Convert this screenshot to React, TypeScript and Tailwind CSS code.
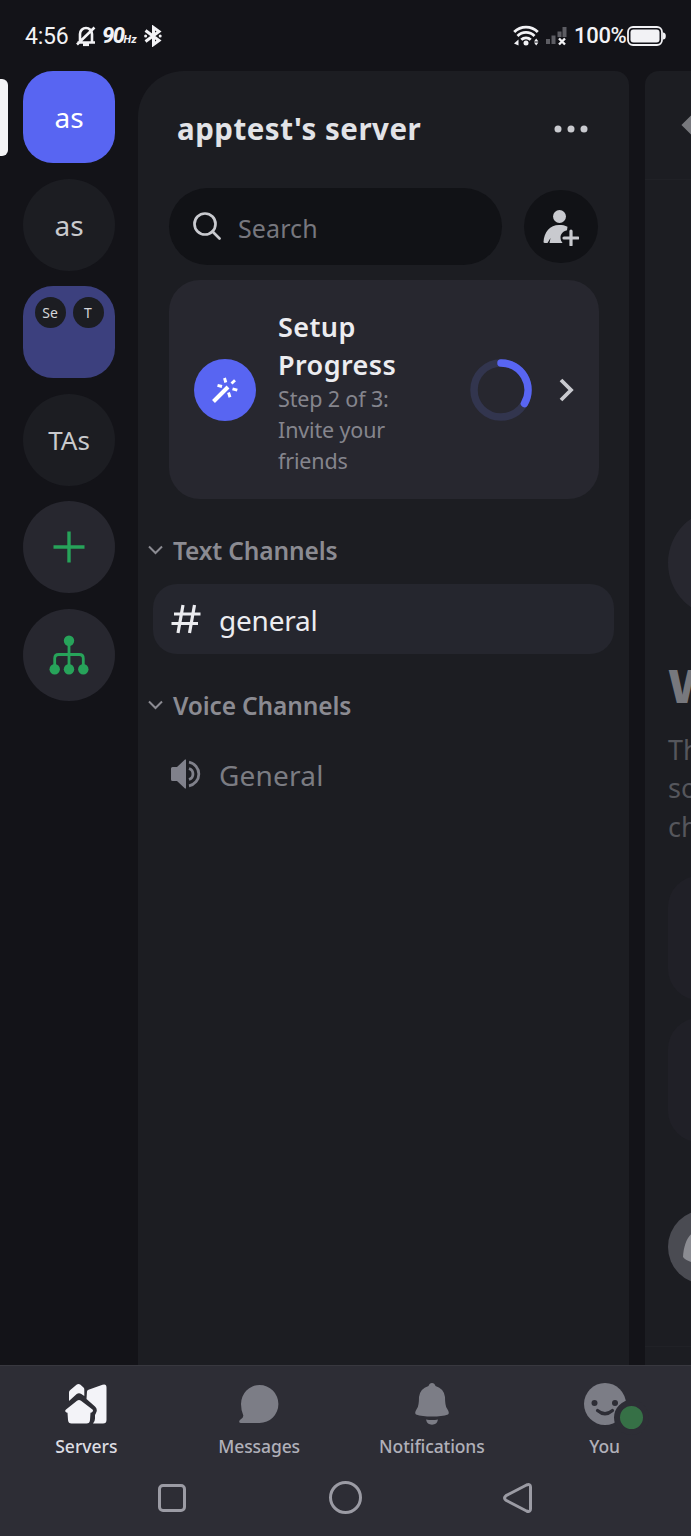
import React from 'react';

function StatusBar() {
  return (
    <header className="flex h-[71px] shrink-0 items-center justify-between pl-[25px] pr-[25px] font-['Roboto',sans-serif] text-[#f2f2f5]">
      <div className="flex h-[30px] items-center">
        <span className="w-[51px] pt-[2px] text-[23px] leading-[30px] tracking-[-0.2px]">4:56</span>
        <svg className="h-[22px] w-[20px]" viewBox="0 0 20 22" fill="none" stroke="currentColor" strokeWidth="2.6">
          <path d="M4 16V9a6 6 0 0 1 12 0v8M1.500 17.500h17.500M1 19.500 18.500 2.500" />
          <path d="M7 19.500h6" strokeWidth="3.200" />
        </svg>
        <span className="ml-[6px] pt-[1px] text-[22px] font-extrabold italic leading-[30px] tracking-[-1.5px]">90</span>
        <span className="mr-[7px] mt-[8px] text-[11px] font-bold italic leading-[14px]">Hz</span>
        <svg className="h-[22px] w-[18px]" viewBox="0 0 18 22" fill="none" stroke="currentColor" strokeWidth="3">
          <path d="M1.500 5.500 15 15.500 9.500 19.500V2.500l5.500 4L1.500 16.500" />
          <circle cx="1.600" cy="11" r="1.500" fill="currentColor" stroke="none" />
          <circle cx="16.200" cy="11" r="1.500" fill="currentColor" stroke="none" />
        </svg>
      </div>
      <div className="flex h-[30px] items-center">
        <svg className="h-[21px] w-[26px]" viewBox="0 0 26 21" fill="none" stroke="currentColor" strokeWidth="2.800">
          <path d="M1.200 7a16.500 16.500 0 0 1 23.600 0M4.500 11a12 12 0 0 1 17 0M8.300 14.800a6.500 6.500 0 0 1 9.400 0" />
          <circle cx="13" cy="18" r="2.500" fill="currentColor" stroke="none" />
          <path d="m1 18.500 4.500-4v6zM21 16.500l2.200-3 2.200 3zM21 17.500l2.200 3 2.200-3z" fill="currentColor" stroke="none" />
        </svg>
        <svg className="ml-[6px] h-[20px] w-[22px]" viewBox="0 0 22 20">
          <path d="M1 13h4v5H1zM6.500 9.500h4V18h-4zM12.500 5.500h4V11h-4zM17.500 1h4v10h-4z" fill="#5d5d63" />
          <path d="m14 12.500 6 6m0-6-6 6" stroke="currentColor" strokeWidth="2.400" />
        </svg>
        <span className="ml-[7px] w-[53px] pt-[1px] text-[22px] font-medium leading-[30px] tracking-[-0.3px]">100%</span>
        <svg className="h-[20px] w-[39px]" viewBox="0 0 39 20">
          <rect x="1" y="1" width="34" height="18" rx="5" fill="none" stroke="currentColor" strokeWidth="1.800" />
          <rect x="3.500" y="3.500" width="29" height="13" rx="3" fill="currentColor" />
          <path d="M36 6.500q2.800 0 2.800 3.500T36 13.500z" fill="currentColor" />
        </svg>
      </div>
    </header>
  );
}

function ServerRail() {
  const circle = 'flex size-[92px] shrink-0 items-center justify-center rounded-full';
  return (
    <nav className="relative flex w-[138px] shrink-0 flex-col items-center gap-[15.5px] text-[28px] text-[#c9cacd]">
      <span className="absolute left-[-8px] top-[8px] h-[77px] w-[16px] rounded-[6px] bg-[#f4f4f6]" />
      <div className="flex size-[92px] shrink-0 items-center justify-center rounded-[30px] bg-[#5865f2] text-white">as</div>
      <div className={circle + ' bg-[#1c1d22]'}>as</div>
      <div className="flex size-[92px] shrink-0 items-start justify-center gap-[7px] rounded-[30px] bg-[#3c407e] pt-[11px] text-[14px] text-[#d5d6da]">
        <span className="flex size-[31px] items-center justify-center rounded-full bg-[#1c1d22]">Se</span>
        <span className="flex size-[31px] items-center justify-center rounded-full bg-[#1c1d22]">T</span>
      </div>
      <div className={circle + ' bg-[#1c1d22] pt-[1px] text-[26px]'}>TAs</div>
      <div className={circle + ' bg-[#27272f]'}>
        <svg className="size-[32px]" viewBox="0 0 32 32" stroke="#27a35a" strokeWidth="3.400">
          <path d="M16 .5v31M.5 16h31" />
        </svg>
      </div>
      <div className={circle + ' bg-[#27272f]'}>
        <svg className="size-[40px]" viewBox="0 0 40 40" fill="none" stroke="#27a35a" strokeWidth="2.800">
          <path d="M20 6v28M5.700 34V23.500q0-4 4-4h20.600q4 0 4 4V34" />
          <g fill="#27a35a" stroke="none">
            <circle cx="20" cy="5.800" r="5.200" />
            <circle cx="5.700" cy="34.300" r="5.200" />
            <circle cx="20" cy="34.300" r="5.200" />
            <circle cx="34.300" cy="34.300" r="5.200" />
          </g>
        </svg>
      </div>
    </nav>
  );
}

function Category({ label }: { label: string }) {
  return (
    <div className="flex h-[34px] items-center pl-[10px] text-[24.5px] font-semibold leading-[34px] tracking-[-0.15px] text-[#8b8b92]">
      <svg className="mb-[2px] mr-[10px] h-[10px] w-[15px]" viewBox="0 0 15 10" fill="none" stroke="currentColor" strokeWidth="2">
        <path d="m1 1.500 6.500 6.500L14 1.500" />
      </svg>
      {label}
    </div>
  );
}

function SetupCard() {
  return (
    <section className="ml-[31px] mt-[15px] flex h-[219px] w-[429.5px] items-center rounded-[31px] bg-[#27272f] pl-[24.5px]">
      <div className="flex size-[62px] shrink-0 items-center justify-center rounded-full bg-[#5865f2]">
        <svg className="size-[26px]" viewBox="0 0 26 26" fill="none" stroke="#fff" strokeWidth="3">
          <path d="M1.500 24.500 16 10" strokeWidth="4" />
          <path d="m12.500 1 1.300 4.500M19.500 6.500l3.500-3.200M5.500 8.300 10 9.500M20.500 11.800l4.800 1.400M16.500 15.500l1.500 4.800" strokeWidth="2.900" />
        </svg>
      </div>
      <div className="ml-[22.500px] w-[160px] pt-[5px]">
        <h2 className="text-[27px] font-semibold leading-[38.4px] tracking-[0.4px] text-[#ececf0]">Setup<br />Progress</h2>
        <p className="text-[21.5px] leading-[30.7px] tracking-[-0.15px] text-[#85858d]">Step 2 of 3:<br />Invite your<br />friends</p>
      </div>
      <svg className="ml-[32px] size-[62px]" viewBox="0 0 62 62" fill="none" strokeWidth="7.500">
        <circle cx="31" cy="31" r="27" stroke="#32354e" />
        <path d="M31 4a27 27 0 0 1 23.400 40.500" stroke="#5865f2" strokeLinecap="round" />
      </svg>
      <svg className="ml-[27px] h-[24px] w-[15px]" viewBox="0 0 15 24" fill="none" stroke="#c9cacf" strokeWidth="3.800">
        <path d="m2 2 10 10L2 22" />
      </svg>
    </section>
  );
}

function ChannelPanel() {
  return (
    <main className="w-[491px] shrink-0 rounded-tl-[46px] rounded-tr-[14px] bg-[#1c1d22]">
      <div className="flex h-[117px] items-center justify-between pb-[2px] pl-[39px] pr-[41px]">
        <h1 className="text-[29.5px] font-bold leading-[36px] tracking-[0.5px] text-[#e2e3e7]">apptest's server</h1>
        <svg className="h-[8px] w-[34px]" viewBox="0 0 34 8" fill="#c9cacf">
          <circle cx="4" cy="4" r="3.500" /><circle cx="17" cy="4" r="3.500" /><circle cx="30" cy="4" r="3.500" />
        </svg>
      </div>
      <div className="flex items-center pl-[31px]">
        <div className="flex h-[77px] w-[333px] items-center rounded-full bg-[#111216] pl-[24px] text-[25px] tracking-[0.1px] text-[#77777e]">
          <svg className="mb-[1px] mr-[17px] size-[28px]" viewBox="0 0 28 28" fill="none" stroke="#c9cacf" strokeWidth="2.700">
            <circle cx="12" cy="12" r="10.500" /><path d="m19.500 19.500 7 7" strokeLinecap="round" />
          </svg>
          <span className="pt-[5px]">Search</span>
        </div>
        <div className="ml-[22px] flex size-[73.500px] items-center justify-center rounded-full bg-[#111216]">
          <svg className="ml-[1px] mt-[2px] size-[36px]" viewBox="0 0 36 36" fill="#c9cacf">
            <circle cx="16.500" cy="6.500" r="6.500" />
            <path d="M.5 32C1 22 7 15 16 15c3.500 0 6 .4 8.500 1.700l-.5 3.600c-4 .7-6.500 4-6.500 7.200 0 2.500 1 4 2 5.500H6.500l1-5-3 5H2Q.5 33 .5 32Z" />
            <path d="M28 21v14M21 28h14" stroke="#c9cacf" strokeWidth="3.200" strokeLinecap="round" />
          </svg>
        </div>
      </div>
      <SetupCard />
      <div className="mt-[35px]"><Category label="Text Channels" /></div>
      <div className="ml-[15px] mt-[16px] flex h-[70px] w-[461px] items-center rounded-[24px] bg-[#25262e] pl-[18px] text-[28px] tracking-[-0.2px] text-[#ececf0]">
        <svg className="mr-[18px] size-[30px]" viewBox="0 0 30 30" fill="none" stroke="currentColor" strokeWidth="3.200">
          <path d="M12 1 7 29M23.500 1l-5 28M3 10h26.500M.5 19.500H27" />
        </svg>
        <span className="pt-[2px]">general</span>
      </div>
      <div className="mt-[35px]"><Category label="Voice Channels" /></div>
      <div className="ml-[15px] mt-[16px] flex h-[70px] items-center pl-[18px] text-[28px] tracking-[0.2px] text-[#7b7c82]">
        <svg className="mr-[18px] size-[30px]" viewBox="0 0 30 30" fill="none" stroke="#80818b" strokeWidth="2.800">
          <path d="M0 9.500q0-1.500 1.500-1.500H6l8-7.500h1v29h-1L6 22H1.500Q0 22 0 20.500z" fill="#80818b" stroke="none" />
          <path d="M18 3.200a12 12 0 0 1 0 23.600M18 9.500a5.800 5.800 0 0 1 0 11" />
        </svg>
        <span className="pt-[2px]">General</span>
      </div>
    </main>
  );
}

function ChatPeek() {
  return (
    <aside className="ml-[16px] w-[46px] shrink-0 overflow-hidden rounded-tl-[14px] bg-[#1c1d22]">
      <div className="flex h-[109px] items-center border-b border-[#202126] pl-[36px]">
        <svg className="h-[22px] w-[26px] shrink-0" viewBox="0 0 26 22" fill="none" stroke="#77787d" strokeWidth="5">
          <path d="M13 2 4 11l9 9M5 11h20" />
        </svg>
      </div>
      <div className="flex h-[1167px] w-[300px] flex-col border-b border-[#202126] pl-[23px]">
        <div className="mt-[329px] size-[108px] shrink-0 rounded-full bg-[#27272f]" />
        <h2 className="mt-[41px] text-[46px] font-black leading-[54px] text-[#77787d]">W</h2>
        <p className="mt-[19px] text-[27px] leading-[38.400px] text-[#55565c]">Th<br />so<br />ch</p>
        <div className="mt-[30px] h-[124px] shrink-0 rounded-[31px] bg-[#202027]" />
        <div className="mt-[18px] h-[124px] shrink-0 rounded-[31px] bg-[#202027]" />
        <div className="mt-[68px] flex size-[74px] shrink-0 items-center rounded-full bg-[#4a4b52] pl-[15px]">
          <svg className="h-[40px] w-[44px]" viewBox="0 0 44 40" fill="#8b8c92">
            <path d="M0 30C1 14 7 2 22 2s21 12 22 28c-4 4-9 5-14 7H14C9 35 3 34 0 30Z" />
          </svg>
        </div>
      </div>
    </aside>
  );
}

function Tab({ label, active, children }: { label: string; active?: boolean; children: React.ReactNode }) {
  return (
    <div className="flex flex-1 flex-col items-center">
      <div className="flex h-[44px] items-center justify-center">{children}</div>
      <span className={active ? 'mt-[7px] text-[17.5px] font-medium leading-[26px] text-[#dddde3]' : 'mt-[7px] text-[17.5px] font-medium leading-[26px] tracking-[-0.1px] text-[#b0b0b9]'}>{label}</span>
    </div>
  );
}

function BottomBar() {
  return (
    <footer className="h-[171px] shrink-0 border-t border-[#38383f] bg-[#2d2d35]">
      <div className="flex h-[107px] pt-[16px]">
        <Tab label="Servers" active>
          <svg className="h-[40px] w-[42px]" viewBox="0 0 42 40" fill="#f3f3f8">
            <path d="M4 8.500q0-1.500 1-2.300l6.500-5.500q2-1.400 4 0L18.500 3.500q.8.700.8 2v6.500l-3-2q-2.300-1.500-4.600 0L4 17Z" />
            <path d="M22 7.500q0-1 1.500-1.700L37.500.8Q41.500-.5 41.500 3.500V36q0 3.500-3.500 3.500H28q2-2 2-5v-3.500l1-2q2-3.500-1-6.500L21.500 15Z" />
            <path d="M12 16.800q2-1.600 4 0L27.500 25.500q1 1 0 2.300-.8 1-2 1L25 36q-.2 3.500-3.500 3.500h-15Q3.300 39.500 3 36l-.5-7.200q-1.200 0-2-1-.8-1.300.5-2.300Z" />
          </svg>
        </Tab>
        <Tab label="Messages">
          <svg className="mb-[1px] h-[38px] w-[40px]" viewBox="0 0 40 38" fill="#7c7d86">
            <path d="M20.500 0a18.900 19 0 0 1 0 38H2Q0 38 .2 36.500q0-1 1.300-2 3-2 2.800-4Q2 25 2 19A18.500 19 0 0 1 20.500 0Z" />
          </svg>
        </Tab>
        <Tab label="Notifications">
          <svg className="h-[42px] w-[34px]" viewBox="0 0 34 42" fill="#7c7d86">
            <path d="M17 0q2.500 0 3.500 3Q29 5.500 30 14q0 9 2 11.500 3 4.500 1 6Q27 33.500 17 33.500T1 31.500q-2-1.500 1-6Q4 23 4 14 5 5.500 13.500 3q1-3 3.500-3ZM11 36.500q6 1 12 0-1 5.200-6 5.200t-6-5.200Z" />
          </svg>
        </Tab>
        <Tab label="You">
          <div className="relative h-[42px] w-[42px]">
            <svg className="size-[42px]" viewBox="0 0 42 42">
              <circle cx="21" cy="21" r="21" fill="#7c7d86" />
              <circle cx="10.500" cy="20" r="3" fill="#2d2d35" /><circle cx="31" cy="20" r="3" fill="#2d2d35" />
              <path d="M13.500 27.500q7.500 6.500 15 0" fill="none" stroke="#2d2d35" strokeWidth="3.200" strokeLinecap="round" />
            </svg>
            <span className="absolute left-[30px] top-[17px] size-[35px] rounded-full border-[6px] border-[#2d2d35] bg-[#367046]" />
          </div>
        </Tab>
      </div>
      <div className="flex h-[49px] items-center pl-[86px] pr-[87px] text-[#9b9ba4]">
        <div className="flex flex-1 justify-center"><div className="size-[28px] rounded-[5px] border-[3px] border-current" /></div>
        <div className="flex flex-1 justify-center"><div className="size-[33px] rounded-full border-[3px] border-current" /></div>
        <div className="flex flex-1 justify-center">
          <svg className="h-[30px] w-[30px]" viewBox="0 0 30 30" fill="none" stroke="currentColor" strokeWidth="3">
            <path d="M3 12.700 23.500 2q4-1.500 4 2v22q0 3.500-4 2L3 17.300Q0 15 3 12.700Z" />
          </svg>
        </div>
      </div>
    </footer>
  );
}

export default function App() {
  return (
    <div className="flex h-[1536px] w-[691px] flex-col overflow-hidden bg-[#131318] font-['Noto_Sans',sans-serif]">
      <StatusBar />
      <div className="flex h-[1294px] shrink-0 overflow-hidden">
        <ServerRail />
        <ChannelPanel />
        <ChatPeek />
      </div>
      <BottomBar />
    </div>
  );
}
